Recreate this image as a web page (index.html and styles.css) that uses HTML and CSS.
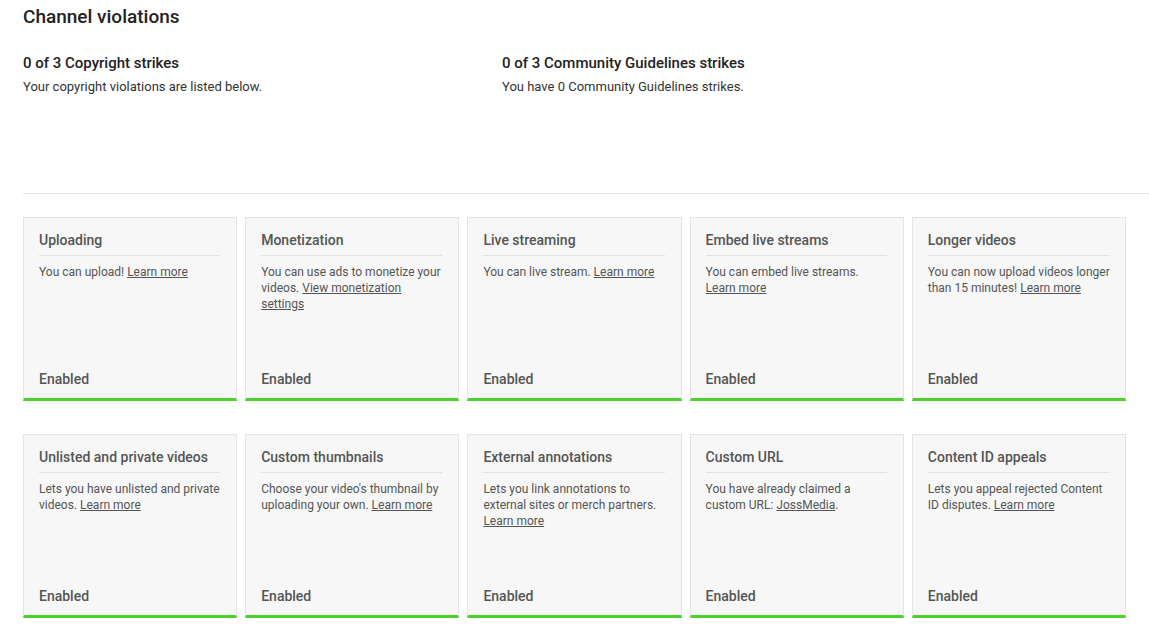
FILE: index.html
```html
<!DOCTYPE html>
<html lang="en">
<head>
  <meta charset="UTF-8">
  <title>Channel status and features</title>
  <link rel="stylesheet" href="styles.css">
</head>

<body>
  <div class="page">
    <h1 class="page-title">Channel violations</h1>

    <div class="strikes">
      <div class="strike">
        <h3>0 of 3 Copyright strikes</h3>
        <p>Your copyright violations are listed below.</p>
      </div>
      <div class="strike">
        <h3>0 of 3 Community Guidelines strikes</h3>
        <p>You have 0 Community Guidelines strikes.</p>
      </div>
    </div>

    <hr class="divider">

    <!-- 功能列表 -->
    <ul class="features">
      <li class="card">
        <h4>Uploading</h4>
        <p>You can upload! <a href="javascript:">Learn more</a></p>
        <span class="status">Enabled</span>
      </li>
      <li class="card">
        <h4>Monetization</h4>
        <p>You can use ads to monetize your videos. <a href="javascript:">View monetization settings</a></p>
        <span class="status">Enabled</span>
      </li>
      <li class="card">
        <h4>Live streaming</h4>
        <p>You can live stream. <a href="javascript:">Learn more</a></p>
        <span class="status">Enabled</span>
      </li>
      <li class="card">
        <h4>Embed live streams</h4>
        <p>You can embed live streams. <a href="javascript:">Learn more</a></p>
        <span class="status">Enabled</span>
      </li>
      <li class="card">
        <h4>Longer videos</h4>
        <p>You can now upload videos longer than 15 minutes! <a href="javascript:">Learn more</a></p>
        <span class="status">Enabled</span>
      </li>
      <li class="card">
        <h4>Unlisted and private videos</h4>
        <p>Lets you have unlisted and private videos. <a href="javascript:">Learn more</a></p>
        <span class="status">Enabled</span>
      </li>
      <li class="card">
        <h4>Custom thumbnails</h4>
        <p>Choose your video's thumbnail by uploading your own. <a href="javascript:">Learn more</a></p>
        <span class="status">Enabled</span>
      </li>
      <li class="card">
        <h4>External annotations</h4>
        <p>Lets you link annotations to external sites or merch partners. <a href="javascript:">Learn more</a></p>
        <span class="status">Enabled</span>
      </li>
      <li class="card">
        <h4>Custom URL</h4>
        <p>You have already claimed a custom URL: <a href="javascript:">JossMedia</a>.</p>
        <span class="status">Enabled</span>
      </li>
      <li class="card">
        <h4>Content ID appeals</h4>
        <p>Lets you appeal rejected Content ID disputes. <a href="javascript:">Learn more</a></p>
        <span class="status">Enabled</span>
      </li>
    </ul>
  </div>
</body>

</html>
```

FILE: styles.css
```css
* {
  margin: 0;
  padding: 0;
  box-sizing: border-box;
}

body {
  font-family: Roboto, "Liberation Sans", Arial, sans-serif;
  color: #222;
  background: #fff;
}

.page {
  padding: 5px 0 0 23px;
}

.page-title {
  font-size: 19px;
  line-height: 24px;
  font-weight: 500;
  color: #222;
}

.strikes {
  display: grid;
  grid-template-columns: 479px auto;
  margin-top: 24px;
}

.strike h3 {
  font-size: 15px;
  line-height: 20px;
  font-weight: 500;
  color: #222;
}

.strike p {
  margin-top: 5px;
  font-size: 13px;
  line-height: 18px;
  color: #333;
}

.divider {
  border: 0;
  border-top: 1px solid #e3e3e3;
  margin-top: 97px;
}

.features {
  list-style: none;
  width: 1103px;
  margin-top: 23px;
  display: grid;
  grid-template-columns: repeat(5, 1fr);
  column-gap: 8px;
  row-gap: 33px;
}

.card {
  height: 184px;
  display: flex;
  flex-direction: column;
  padding: 12px 16px 9px 15px;
  background: #f7f7f7;
  border: 1px solid #e4e4e4;
  border-bottom: 3px solid #4cd02c;
}

.card h4 {
  font-size: 14px;
  line-height: 20px;
  font-weight: 500;
  color: #555;
  padding-bottom: 5px;
  border-bottom: 1px solid #e2e2e2;
}

.card p {
  margin: 8px -3px 0 0;
  font-size: 12px;
  line-height: 16px;
  color: #555;
}

.card p a {
  color: #555;
  text-decoration: underline;
}

.card .status {
  margin-top: auto;
  font-size: 14px;
  line-height: 20px;
  font-weight: 500;
  color: #555;
}
```
